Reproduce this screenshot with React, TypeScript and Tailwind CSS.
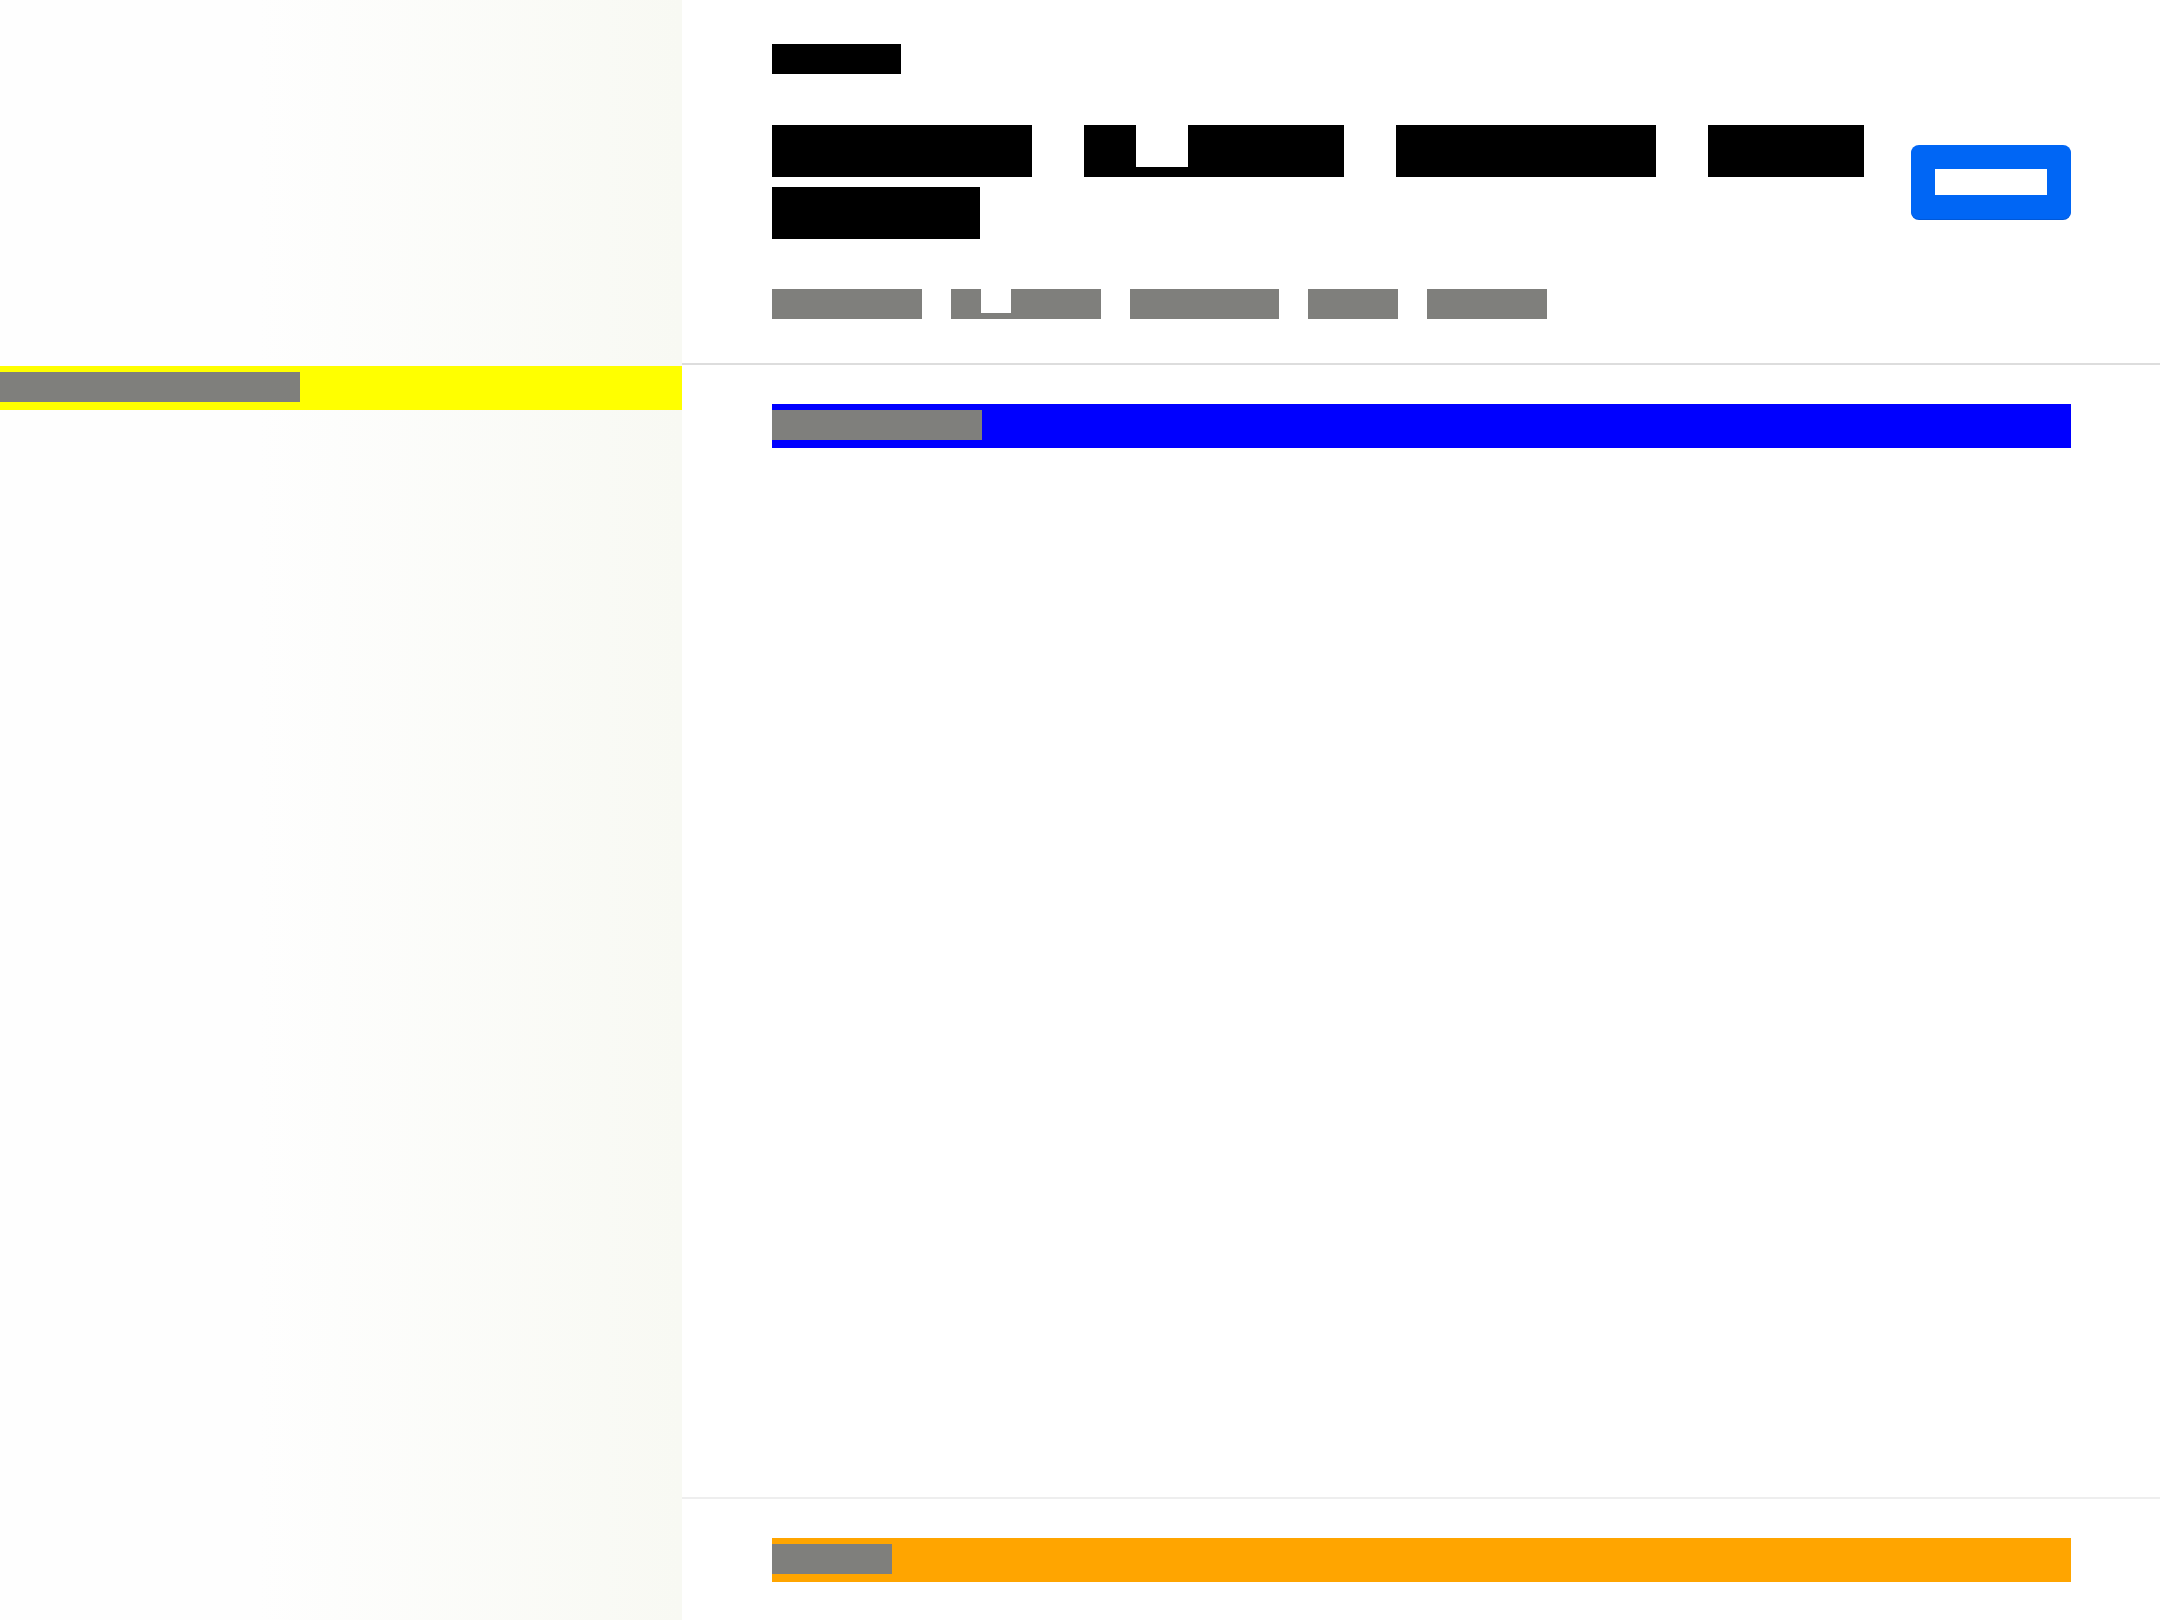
type WordProps = {
  w: number;
  h: number;
  color: string;
  notch?: { left: number; width: number; depth: number };
};

// one text run drawn as a solid bar, with an optional low glyph cut out of the top
const Word = ({ w, h, color, notch }: WordProps) => {
  return (
    <span className={`relative block shrink-0 ${color}`} style={{ width: w, height: h }}>
      {notch && (
        <span
          className="absolute top-0 bg-white"
          style={{ left: notch.left, width: notch.width, height: notch.depth }}
        />
      )}
    </span>
  );
};

const Sidebar = () => {
  return (
    <aside className="w-[682px] shrink-0 bg-gradient-to-r from-[#fefefe] from-[38%] to-[#f8f9f3] pt-[366px]">
      <div className="h-[44px] bg-[#ffff00] py-[6px]">
        <div className="h-[30px] w-[300px] bg-[#7f7f7c]" />
      </div>
    </aside>
  );
};

const Header = () => {
  return (
    <header className="border-b-2 border-[#dddddd] px-[89px] pt-[44px] pb-[44px] pl-[90px]">
      <div className="h-[30px] w-[129px] bg-black" />
      <div className="mt-[51px] flex items-center justify-between">
        <div className="flex flex-col gap-[10px]">
          <div className="flex gap-[52px]">
            <Word w={260} h={52} color="bg-black" />
            <Word w={260} h={52} color="bg-black" notch={{ left: 52, width: 52, depth: 42 }} />
            <Word w={260} h={52} color="bg-black" />
            <Word w={156} h={52} color="bg-black" />
          </div>
          <div className="flex">
            <Word w={208} h={52} color="bg-black" />
          </div>
        </div>
        <button className="flex h-[74px] w-[160px] items-center justify-center rounded-[8px] bg-[#0066f5] shadow-[0_1px_0_#0058d8]">
          <span className="block h-[26px] w-[112px] bg-white" />
        </button>
      </div>
      <nav className="mt-[50px] flex gap-[29px]">
        <Word w={150} h={30} color="bg-[#7f7f7c]" />
        <Word w={150} h={30} color="bg-[#7f7f7c]" notch={{ left: 30, width: 30, depth: 24 }} />
        <Word w={149} h={30} color="bg-[#7f7f7c]" />
        <Word w={90} h={30} color="bg-[#7f7f7c]" />
        <Word w={120} h={30} color="bg-[#7f7f7c]" />
      </nav>
    </header>
  );
};

const App = () => {
  return (
    <div className="flex h-[1620px] w-[2160px] overflow-hidden bg-white">
      <Sidebar />
      <main className="flex flex-1 flex-col">
        <Header />
        <section className="flex-1 px-[89px] pl-[90px] pt-[39px]">
          <div className="h-[44px] bg-[#0000ff] py-[6px]">
            <div className="h-[30px] w-[210px] bg-[#7f7f7c]" />
          </div>
        </section>
        <footer className="h-[123px] border-t-2 border-[#eeeeee] px-[89px] pl-[90px] pt-[39px]">
          <div className="h-[44px] bg-[#ffa500] py-[6px]">
            <div className="h-[30px] w-[120px] bg-[#7f7f7c]" />
          </div>
        </footer>
      </main>
    </div>
  );
};

export default App;
